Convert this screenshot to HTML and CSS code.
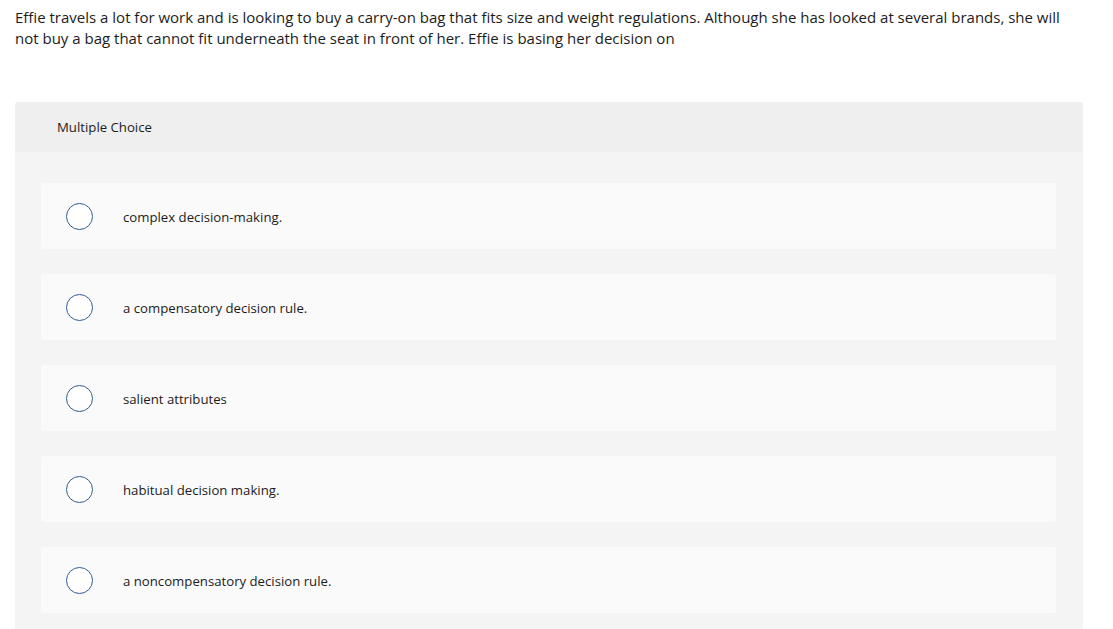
FILE: index.html
```html
<!DOCTYPE html>
<html>
<head>
<meta charset="utf-8">
<link rel="stylesheet" href="styles.css">
</head>
<body>
<div class="page">
  <p class="question">Effie travels a lot for work and is looking to buy a carry-on bag that fits size and weight regulations. Although she has looked at several brands, she will not buy a bag that cannot fit underneath the seat in front of her. Effie is basing her decision on</p>
  <section class="panel">
    <div class="panel-head">Multiple Choice</div>
    <div class="panel-body">
      <div class="option"><span class="radio"></span><span class="label">complex decision-making.</span></div>
      <div class="option"><span class="radio"></span><span class="label">a compensatory decision rule.</span></div>
      <div class="option"><span class="radio"></span><span class="label">salient attributes</span></div>
      <div class="option"><span class="radio"></span><span class="label">habitual decision making.</span></div>
      <div class="option"><span class="radio"></span><span class="label">a noncompensatory decision rule.</span></div>
    </div>
  </section>
</div>
</body>
</html>
```

FILE: styles.css
```css
html, body {
  margin: 0;
  padding: 0;
  background: #ffffff;
}
body {
  font-family: "Open Sans", "Lato", sans-serif;
  color: #1c1c1c;
  overflow: hidden;
}
.page {
  padding: 0 30px 0 15px;
}
.question {
  margin: 0;
  padding-top: 7px;
  font-size: 15px;
  line-height: 21px;
  height: 95px;
}
.panel {
  background: #f4f4f4;
  border-radius: 3px 3px 0 0;
  height: 540px;
}
.panel-head {
  background: #efefef;
  height: 50px;
  display: flex;
  align-items: center;
  padding-left: 42px;
  font-size: 13.2px;
  border-radius: 3px 3px 0 0;
}
.panel-body {
  padding: 31px 27px 0 26px;
  display: flex;
  flex-direction: column;
  gap: 25px;
}
.option {
  background: #fafafa;
  border-radius: 3px;
  height: 66px;
  display: flex;
  align-items: center;
  padding-left: 25px;
}
.radio {
  width: 25px;
  height: 25px;
  border: 1.5px solid #2d5e90;
  border-radius: 50%;
  background: #ffffff;
  flex: none;
}
.label {
  margin-left: 30px;
  padding-top: 1px;
  font-size: 13.2px;
}
```
